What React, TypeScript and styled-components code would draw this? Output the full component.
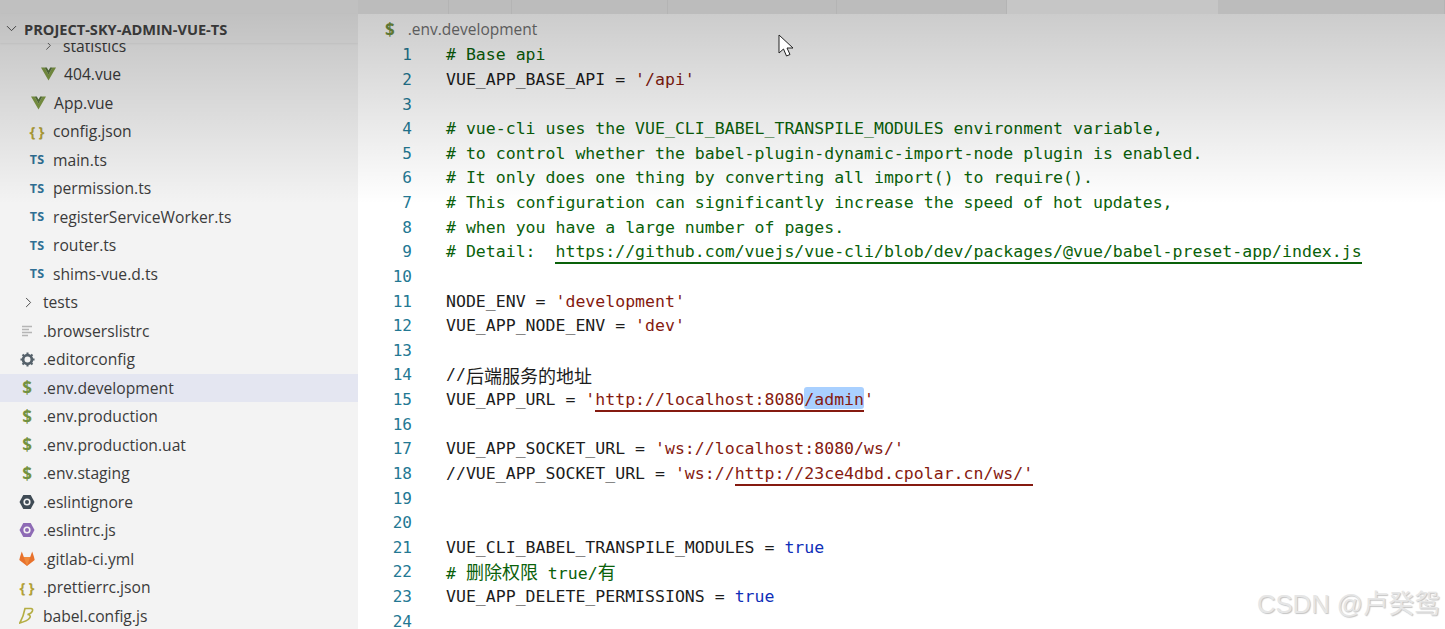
import React from 'react';
import styled, { createGlobalStyle } from 'styled-components';
import { ChevronDown, ChevronRight } from 'lucide-react';

const GlobalStyle = createGlobalStyle`
  html, body {
    margin: 0;
    padding: 0;
    background: #fff;
    overflow: hidden;
  }
`;

const Page = styled.div`
  position: relative;
  display: flex;
  width: 1445px;
  height: 629px;
  overflow: hidden;
  background: #fff;
`;

const Shade = styled.div`
  position: absolute;
  inset: 14px 0 auto 0;
  height: 190px;
  background: linear-gradient(to bottom, rgba(0, 0, 0, 0.2), rgba(0, 0, 0, 0));
  pointer-events: none;
`;

const Sidebar = styled.aside`
  position: relative;
  isolation: isolate;
  width: 358px;
  flex-shrink: 0;
  background: #f3f3f3;
  overflow: hidden;
  font-family: 'Open Sans', 'Liberation Sans', sans-serif;
`;

const SidebarTop = styled.div`
  height: 14px;
  background: #c0c0c0;
`;

const ProjectHeader = styled.div`
  position: relative;
  z-index: 1;
  height: 29px;
  display: flex;
  align-items: center;
  gap: 4px;
  padding-left: 3px;
  box-sizing: border-box;
  background: #f1f1f1;
  box-shadow: 0 1px 2px rgba(0, 0, 0, 0.06);
  color: #444;
  font-size: 14.6px;
  font-weight: 700;
  svg {
    width: 17px;
    height: 17px;
    stroke-width: 1.3;
  }
`;

const FileList = styled.div`
  margin-top: -11.5px;
`;

const Row = styled.div<{ $indent: number; $active?: boolean }>`
  display: flex;
  align-items: center;
  height: 28.5px;
  padding-left: ${(props) => props.$indent}px;
  background: ${(props) => (props.$active ? '#e4e6f1' : 'transparent')};
  color: #3b3b3b;
  font-size: 15.65px;
`;

const IconSlot = styled.span`
  width: 24px;
  height: 18px;
  margin-right: 4px;
  display: flex;
  align-items: center;
  justify-content: center;
  flex-shrink: 0;
  svg {
    display: block;
  }
`;

const Chevron = styled(ChevronRight)`
  margin-left: 3px;
  color: #424242;
`;

const TsBadge = styled.span`
  color: #2f6f94;
  font-size: 12.5px;
  font-weight: 700;
  letter-spacing: 0.2px;
`;

const Braces = styled.span`
  color: #b2a13a;
  font-size: 15px;
  font-weight: 700;
  letter-spacing: 3px;
  margin-right: -3px;
`;

const Dollar = styled.span`
  color: #73923f;
  font-size: 17px;
  font-weight: 700;
`;

const Editor = styled.main`
  flex: 1;
  min-width: 0;
  position: relative;
`;

const TabBar = styled.div`
  height: 14px;
  display: flex;
  background: #bcbcbc;
`;

const Tab = styled.div<{ $width: number; $active?: boolean }>`
  width: ${(props) => props.$width}px;
  background: ${(props) => (props.$active ? '#c6c6c6' : 'transparent')};
  border-right: 1px solid ${(props) => (props.$active ? 'transparent' : '#b4b4b4')};
  box-sizing: border-box;
`;

const Breadcrumb = styled.div`
  height: 30px;
  display: flex;
  align-items: center;
  gap: 13px;
  padding-left: 27px;
  font-family: 'Open Sans', 'Liberation Sans', sans-serif;
  font-size: 15.5px;
  color: #717171;
`;

const Code = styled.div`
  margin-top: -1.5px;
  font-family: 'DejaVu Sans Mono', 'Liberation Mono', 'Noto Sans CJK SC', monospace;
  font-size: 16.55px;
`;

const Line = styled.div`
  display: flex;
  height: 24.64px;
  align-items: center;
  white-space: pre;
  color: #1c1c1c;
`;

const LineNumber = styled.span`
  width: 54px;
  text-align: right;
  margin-right: 34px;
  color: #237893;
  flex-shrink: 0;
  font-size: 16px;
`;

const Comment = styled.span`
  color: #0a610a;
`;

const Str = styled.span`
  color: #851a10;
`;

const Keyword = styled.span`
  color: #0f2fb8;
`;

const Link = styled.span<{ $color: string }>`
  color: inherit;
  box-shadow: 0 2px 0 ${(props) => props.$color};
  padding-bottom: 1px;
`;

const Selected = styled.span`
  background: #a9d0ff;
  border-radius: 3px;
  padding-top: 3px;
`;

const Cjk = styled.span`
  font-family: 'Noto Sans CJK SC', sans-serif;
  font-size: 18px;
  line-height: 20px;
`;

const Watermark = styled.div`
  position: absolute;
  right: 5px;
  bottom: 9px;
  font-family: 'Liberation Sans', 'Noto Sans CJK SC', sans-serif;
  font-size: 25.7px;
  line-height: 32px;
  color: #e6e6e6;
  text-shadow: 1px 1px 1px #c4c4c4;
`;

const Cursor = styled.svg`
  position: absolute;
  left: 778px;
  top: 34px;
`;

const VueIcon = () => (
  <svg width="15" height="14" viewBox="0 0 17 15">
    <path d="M0 0h4l4.500 8L13 0h4L8.500 15z" fill="#7f9a45" />
    <path d="M4 0h2.500l2 3.500 2-3.500H13L8.500 8z" fill="#56723a" />
  </svg>
);

const LinesIcon = () => (
  <svg width="12" height="12" viewBox="0 0 12 12" stroke="#b5b5b5" strokeWidth="1.3">
    <path d="M1 1.500h10M1 4.500h7M1 7.500h10M1 10.500h6" />
  </svg>
);

const GearIcon = () => (
  <svg width="15" height="15" viewBox="0 0 16 16">
    <circle cx="8" cy="8" r="4.700" fill="none" stroke="#56626b" strokeWidth="3" />
    <path
      d="M8 0.500v3M8 12.500v3M0.500 8h3M12.500 8h3M2.700 2.700l2.100 2.100M11.200 11.200l2.100 2.100M13.300 2.700l-2.100 2.100M4.800 11.200l-2.100 2.100"
      stroke="#56626b"
      strokeWidth="2.200"
    />
  </svg>
);

const HexIcon = ({ color }: { color: string }) => (
  <svg width="16" height="16" viewBox="0 0 16 16">
    <path d="M4.300 1h7.400L15.500 8l-3.800 7H4.300L0.500 8z" fill={color} />
    <circle cx="8" cy="8" r="3.600" fill="#f3f3f3" />
    <circle cx="8" cy="8" r="2" fill={color} />
  </svg>
);

const GitlabIcon = () => (
  <svg width="16" height="15" viewBox="0 0 16 15">
    <path d="M8 15L0.300 9 1 6 2.800 0.500 4.800 6h6.400l2-5.500L15 6l0.700 3z" fill="#e8722c" />
    <path d="M8 15L4.800 6h6.400z" fill="#f08a3c" />
  </svg>
);

const BabelIcon = () => (
  <svg width="16" height="17" viewBox="0 0 16 17" fill="none" stroke="#b4ad42" strokeWidth="1.600">
    <path d="M6 1.500h6c2.500 0 2.500 4.500-3.500 6 3 .3 3.500 2.500 1.500 4.200C8.500 13.500 4 15 .8 16 3 12 5 7 6 1.500z" />
  </svg>
);

type FileRow = { name: string; indent: number; icon: React.ReactNode; active?: boolean };

const ts = <TsBadge>TS</TsBadge>;
const json = <Braces>{'{}'}</Braces>;
const env = <Dollar>$</Dollar>;

const files: FileRow[] = [
  { name: 'statistics', indent: 35, icon: <Chevron size={15} strokeWidth={1.3} /> },
  { name: '404.vue', indent: 36, icon: <VueIcon /> },
  { name: 'App.vue', indent: 26, icon: <VueIcon /> },
  { name: 'config.json', indent: 25, icon: json },
  { name: 'main.ts', indent: 25, icon: ts },
  { name: 'permission.ts', indent: 25, icon: ts },
  { name: 'registerServiceWorker.ts', indent: 25, icon: ts },
  { name: 'router.ts', indent: 25, icon: ts },
  { name: 'shims-vue.d.ts', indent: 25, icon: ts },
  { name: 'tests', indent: 15, icon: <Chevron size={17} strokeWidth={1.3} /> },
  { name: '.browserslistrc', indent: 15, icon: <LinesIcon /> },
  { name: '.editorconfig', indent: 15, icon: <GearIcon /> },
  { name: '.env.development', indent: 15, icon: env, active: true },
  { name: '.env.production', indent: 15, icon: env },
  { name: '.env.production.uat', indent: 15, icon: env },
  { name: '.env.staging', indent: 15, icon: env },
  { name: '.eslintignore', indent: 15, icon: <HexIcon color="#3f4b55" /> },
  { name: '.eslintrc.js', indent: 15, icon: <HexIcon color="#8e6bb5" /> },
  { name: '.gitlab-ci.yml', indent: 15, icon: <GitlabIcon /> },
  { name: '.prettierrc.json', indent: 15, icon: json },
  { name: 'babel.config.js', indent: 15, icon: <BabelIcon /> },
];

const codeLines: React.ReactNode[] = [
  <Comment># Base api</Comment>,
  <>VUE_APP_BASE_API = <Str>'/api'</Str></>,
  '',
  <Comment># vue-cli uses the VUE_CLI_BABEL_TRANSPILE_MODULES environment variable,</Comment>,
  <Comment># to control whether the babel-plugin-dynamic-import-node plugin is enabled.</Comment>,
  <Comment># It only does one thing by converting all import() to require().</Comment>,
  <Comment># This configuration can significantly increase the speed of hot updates,</Comment>,
  <Comment># when you have a large number of pages.</Comment>,
  <Comment># Detail:  <Link $color="#0a610a">https://github.com/vuejs/vue-cli/blob/dev/packages/@vue/babel-preset-app/index.js</Link></Comment>,
  '',
  <>NODE_ENV = <Str>'development'</Str></>,
  <>VUE_APP_NODE_ENV = <Str>'dev'</Str></>,
  '',
  <>//<Cjk>后端服务的地址</Cjk></>,
  <>VUE_APP_URL = <Str>'<Link $color="#851a10">http://localhost:8080<Selected>/admin</Selected></Link>'</Str></>,
  '',
  <>VUE_APP_SOCKET_URL = <Str>'ws://localhost:8080/ws/'</Str></>,
  <>//VUE_APP_SOCKET_URL = <Str>'ws://<Link $color="#851a10">http://23ce4dbd.cpolar.cn/ws/'</Link></Str></>,
  '',
  '',
  <>VUE_CLI_BABEL_TRANSPILE_MODULES = <Keyword>true</Keyword></>,
  <Comment># <Cjk>删除权限</Cjk> true/<Cjk>有</Cjk></Comment>,
  <>VUE_APP_DELETE_PERMISSIONS = <Keyword>true</Keyword></>,
  '',
];

const tabWidths = [91, 63, 156, 169, 170, 211, 227];

const App = () => {
  return (
    <Page>
      <GlobalStyle />
      <Sidebar>
        <SidebarTop />
        <ProjectHeader>
          <ChevronDown />
          PROJECT-SKY-ADMIN-VUE-TS
        </ProjectHeader>
        <FileList>
          {files.map((file) => (
            <Row key={file.name} $indent={file.indent} $active={file.active}>
              <IconSlot>{file.icon}</IconSlot>
              {file.name}
            </Row>
          ))}
        </FileList>
      </Sidebar>
      <Editor>
        <TabBar>
          {tabWidths.map((width, i) => (
            <Tab key={i} $width={width} $active={i === 5} />
          ))}
        </TabBar>
        <Breadcrumb>
          <Dollar>$</Dollar>
          .env.development
        </Breadcrumb>
        <Code>
          {codeLines.map((line, i) => (
            <Line key={i}>
              <LineNumber>{i + 1}</LineNumber>
              {line}
            </Line>
          ))}
        </Code>
      </Editor>
      <Shade />
      <Cursor width="18" height="25" viewBox="0 0 18 25">
        <path d="M1 1v18l4.500-4 3 7 3.500-1.500-3-6.500h6z" fill="#fff" stroke="#222" strokeWidth="1" />
      </Cursor>
      <Watermark>CSDN @卢癸鸳</Watermark>
    </Page>
  );
};

export default App;
